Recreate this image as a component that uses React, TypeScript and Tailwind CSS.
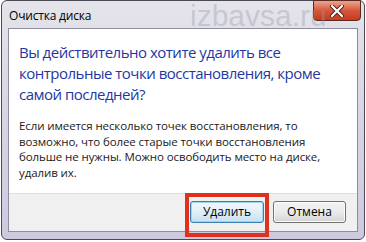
import React from "react";

const font = { fontFamily: '"Open Sans", "Noto Sans", "DejaVu Sans", sans-serif' };

export default function App() {
  return (
    <div
      className="relative w-[366px] h-[242px] overflow-hidden bg-white"
      style={font}
    >
      {/* window frame */}
      <div className="absolute left-[1px] top-0 w-[364px] h-[240px] rounded-[6px] border border-[#4b4b55] bg-gradient-to-b from-[#e4e4ea] via-[#d6d5e2] to-[#cdcadf] flex flex-col">
        {/* title bar */}
        <div className="relative h-[27px] flex items-center pl-[7px] text-[12px] text-black">
          <span className="mt-[3px] tracking-[-0.2px]">Очистка диска</span>
          <div className="absolute right-[3px] top-[-1px] w-[48px] h-[21px] rounded-b-[4px] border border-[#5a2a20] bg-gradient-to-b from-[#e8a590] via-[#d4573a] to-[#c8381c] flex items-center justify-center">
            <svg width="14" height="12" viewBox="0 0 14 12">
              <path d="M2 1 L12 11 M12 1 L2 11" stroke="#4a2018" strokeWidth="4" strokeLinecap="round" />
              <path d="M2 1 L12 11 M12 1 L2 11" stroke="#ffffff" strokeWidth="2.2" strokeLinecap="round" />
            </svg>
          </div>
        </div>
        {/* client area */}
        <div className="mx-[6px] flex flex-col border border-[#8d8ca0] bg-white h-[204px]">
          <div className="flex-1 px-[10px] pt-[13px]">
            <div className="text-[15px] leading-[21px] tracking-[-0.5px] text-[#1f37a2] whitespace-nowrap">
              Вы действительно хотите удалить все
              <br />
              контрольные точки восстановления, кроме
              <br />
              самой последней?
            </div>
            <div className="mt-[13px] text-[11.5px] leading-[15.5px] tracking-[-0.1px] text-[#1a1a1a] whitespace-nowrap">
              Если имеется несколько точек восстановления, то
              <br />
              возможно, что более старые точки восстановления
              <br />
              больше не нужны. Можно освободить место на диске,
              <br />
              удалив их.
            </div>
          </div>
          <div className="h-[38px] bg-[#f0f0f0] border-t border-[#dfdfdf] flex items-center justify-end gap-[9px] pr-[11px] pb-[2px]">
            <button className="w-[74px] h-[22px] rounded-[3px] border border-[#3c7fb1] bg-gradient-to-b from-[#f2f8fc] via-[#e1eef8] to-[#c7e1f3] text-[12px] text-black shadow-[inset_0_0_0_1px_#9fd4f1]">
              Удалить
            </button>
            <button className="w-[73px] h-[22px] rounded-[3px] border border-[#707070] bg-gradient-to-b from-[#f2f2f2] via-[#ebebeb] to-[#d4d4d4] text-[12px] text-black shadow-[inset_0_0_0_1px_#fcfcfc]">
              Отмена
            </button>
          </div>
        </div>
      </div>
      {/* watermark */}
      <div className="absolute left-[190px] top-0 text-[30px] font-light leading-[32px] text-[#9a9aa8]/40 pointer-events-none" style={{ fontFamily: '"Liberation Sans", sans-serif' }}>
        izbavsa.ru
      </div>
      {/* red highlight */}
      <div className="absolute left-[185px] top-[193px] w-[84px] h-[44px] border-[4px] border-[#e0301e]" />
    </div>
  );
}
